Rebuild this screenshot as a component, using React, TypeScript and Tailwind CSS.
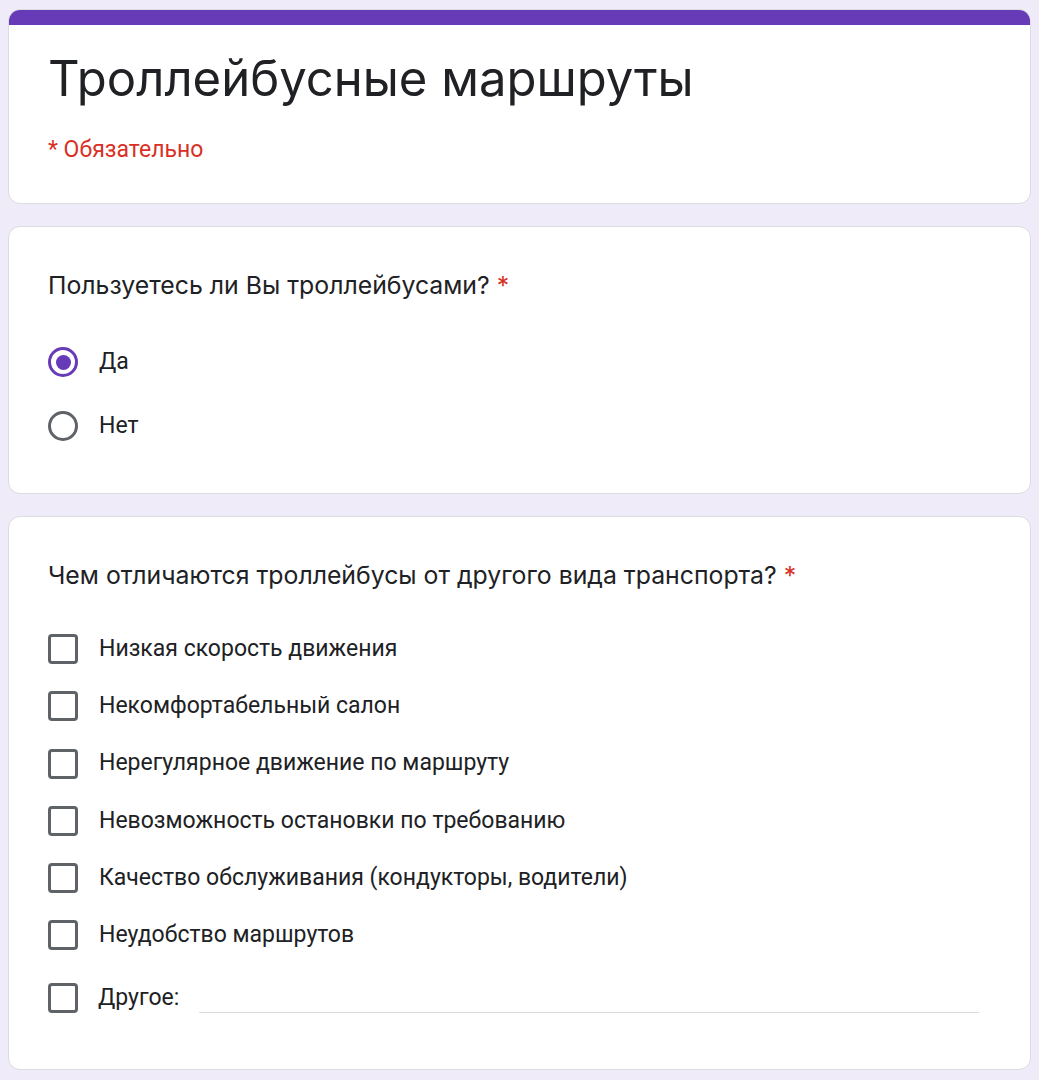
import React from 'react';

const options = [
  'Низкая скорость движения',
  'Некомфортабельный салон',
  'Нерегулярное движение по маршруту',
  'Невозможность остановки по требованию',
  'Качество обслуживания (кондукторы, водители)',
  'Неудобство маршрутов',
];

const titleFont = { fontFamily: 'Inter, "Open Sans", sans-serif' };

const Checkbox: React.FC = () => (
  <div className="w-[30px] h-[30px] shrink-0 rounded-[4px] border-[3px] border-[#5f6368]" />
);

const App: React.FC = () => {
  const [answer, setAnswer] = React.useState<'yes' | 'no'>('yes');

  return (
    <div
      className="min-h-screen bg-[#f0ebf8] px-[8px] pt-[9px] pb-[20px] text-[#202124]"
      style={{ fontFamily: 'Roboto, "Liberation Sans", Arial, sans-serif' }}
    >
      {/* header */}
      <div className="bg-white rounded-[12px] border border-[#dadce0] overflow-hidden">
        <div className="h-[15px] bg-[#673ab7]" />
        <div className="px-[39px] pt-[24px] pb-[38px]">
          <h1 className="text-[49px] leading-[60px] font-normal text-[#202124]" style={titleFont}>
            Троллейбусные маршруты
          </h1>
          <p className="mt-[26px] text-[23px] leading-[30px] text-[#d93025]">* Обязательно</p>
        </div>
      </div>

      {/* question 1 */}
      <div className="mt-[22px] bg-white rounded-[12px] border border-[#dadce0] px-[39px] pt-[40px] pb-[52px]">
        <h2 className="text-[24.8px] leading-[36px]" style={titleFont}>
          Пользуетесь ли Вы троллейбусами? <span className="text-[#d93025]">*</span>
        </h2>
        <div className="mt-[44px] flex flex-col gap-[34px]">
          {[
            { key: 'yes' as const, label: 'Да' },
            { key: 'no' as const, label: 'Нет' },
          ].map(o => (
            <label key={o.key} className="flex items-center gap-[21px] h-[30px] cursor-pointer" onClick={() => setAnswer(o.key)}>
              <div
                className={`w-[30px] h-[30px] rounded-full border-[3px] flex items-center justify-center ${
                  answer === o.key ? 'border-[#673ab7]' : 'border-[#5f6368]'
                }`}
              >
                {answer === o.key && <div className="w-[15px] h-[15px] rounded-full bg-[#673ab7]" />}
              </div>
              <span className="text-[23px]">{o.label}</span>
            </label>
          ))}
        </div>
      </div>

      {/* question 2 */}
      <div className="mt-[22px] bg-white rounded-[12px] border border-[#dadce0] px-[39px] pt-[40px] pb-[56px]">
        <h2 className="text-[24.8px] leading-[36px]" style={titleFont}>
          Чем отличаются троллейбусы от другого вида транспорта? <span className="text-[#d93025]">*</span>
        </h2>
        <div className="mt-[41px] flex flex-col gap-[27.3px]">
          {options.map(o => (
            <div key={o} className="flex items-center gap-[21px] h-[30px]">
              <Checkbox />
              <span className="text-[23px]">{o}</span>
            </div>
          ))}
          <div className="flex items-center gap-[20px] h-[30px] mt-[5.5px]">
            <Checkbox />
            <span className="text-[23px]">Другое:</span>
            <div className="flex-1 mr-[12px] self-end border-b border-[#dadce0] h-[15px]" />
          </div>
        </div>
      </div>
    </div>
  );
};

export default App;
